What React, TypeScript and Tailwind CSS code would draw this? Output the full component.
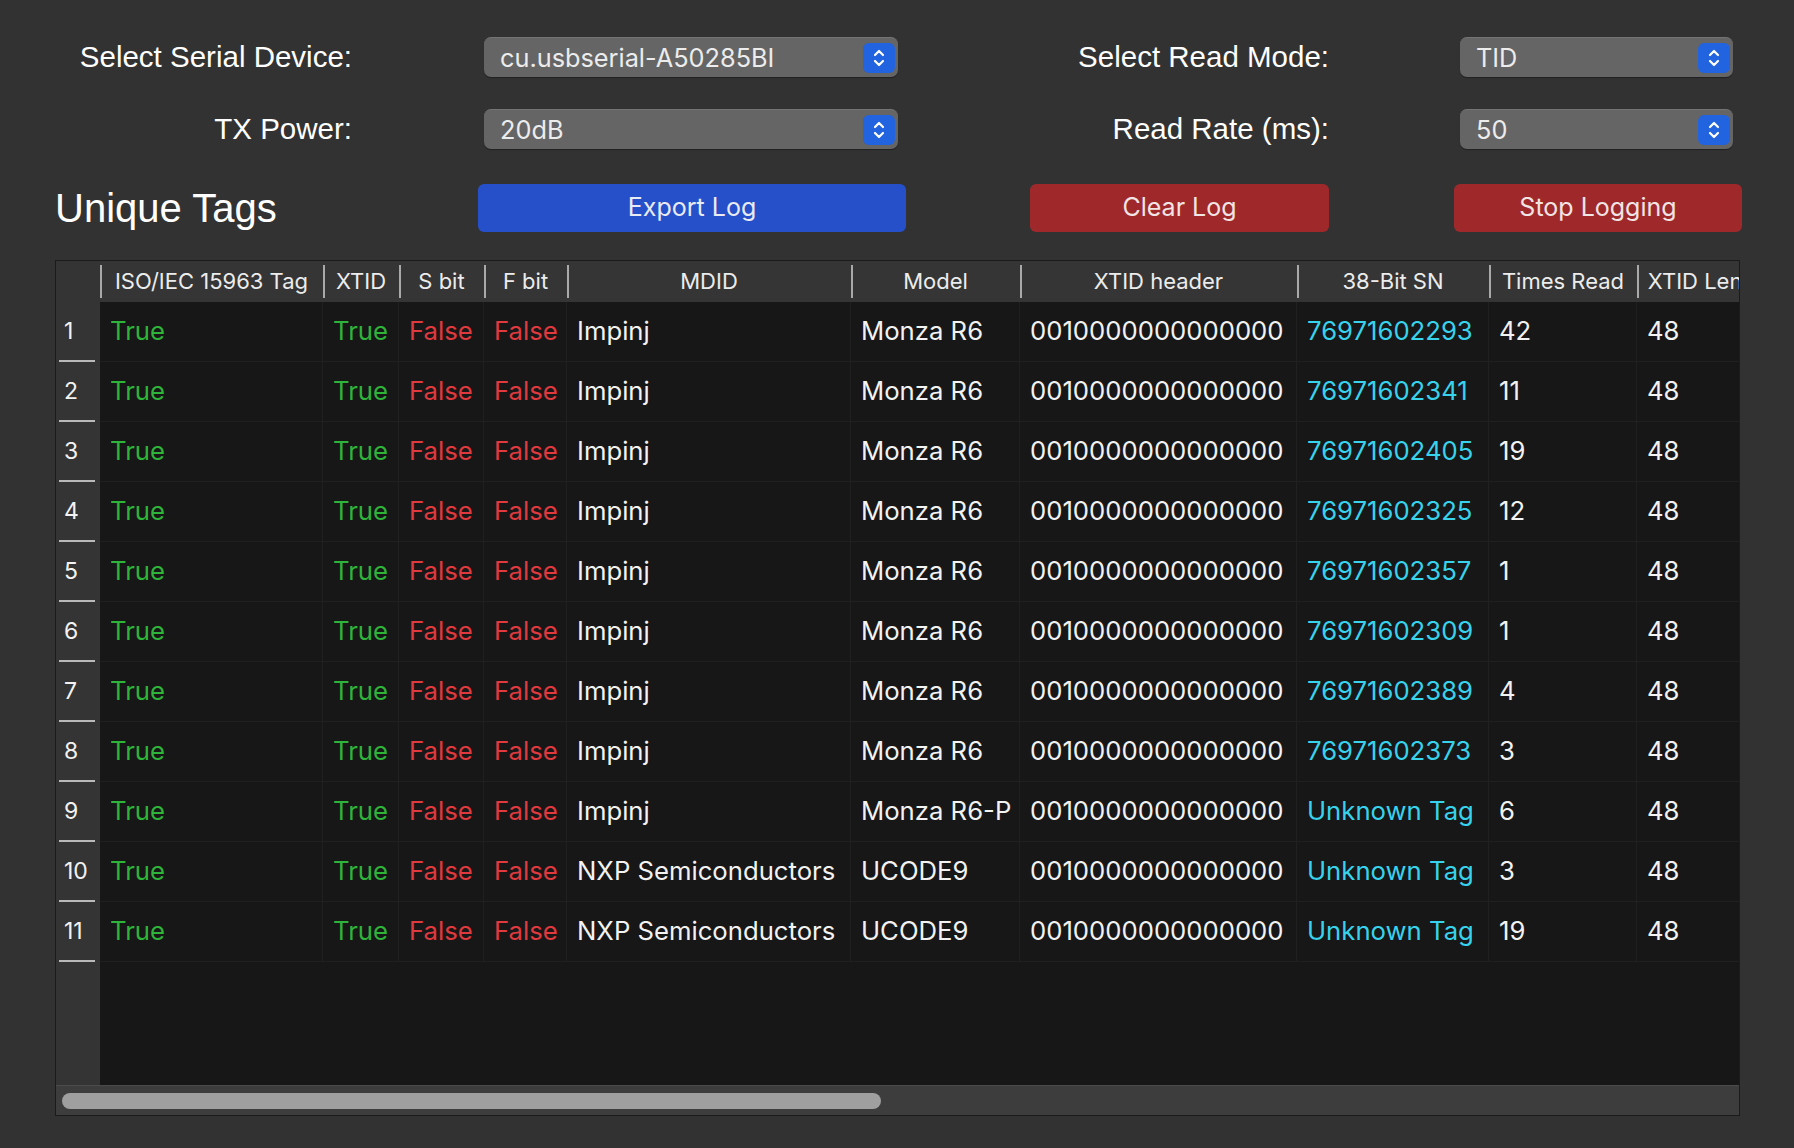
import React from "react";

const cols = [
  { key: "iso", title: "ISO/IEC 15963 Tag", w: 223 },
  { key: "xtid", title: "XTID", w: 76 },
  { key: "s", title: "S bit", w: 85 },
  { key: "f", title: "F bit", w: 83 },
  { key: "mdid", title: "MDID", w: 284 },
  { key: "model", title: "Model", w: 169 },
  { key: "hdr", title: "XTID header", w: 277 },
  { key: "sn", title: "38-Bit SN", w: 192 },
  { key: "times", title: "Times Read", w: 148 },
  { key: "len", title: "XTID Length", w: 150 },
];

const rows: [string, string, string, string][] = [
  ["Impinj", "Monza R6", "76971602293", "42"],
  ["Impinj", "Monza R6", "76971602341", "11"],
  ["Impinj", "Monza R6", "76971602405", "19"],
  ["Impinj", "Monza R6", "76971602325", "12"],
  ["Impinj", "Monza R6", "76971602357", "1"],
  ["Impinj", "Monza R6", "76971602309", "1"],
  ["Impinj", "Monza R6", "76971602389", "4"],
  ["Impinj", "Monza R6", "76971602373", "3"],
  ["Impinj", "Monza R6-P", "Unknown Tag", "6"],
  ["NXP Semiconductors", "UCODE9", "Unknown Tag", "3"],
  ["NXP Semiconductors", "UCODE9", "Unknown Tag", "19"],
];

const font = { fontFamily: "Inter, 'Noto Sans', sans-serif" };
const helv = { fontFamily: "'Liberation Sans', Arial, sans-serif" };

function Stepper() {
  return (
    <div className="w-[32px] h-[30px] rounded-[6px] bg-[#2263df] flex items-center justify-center shrink-0">
      <svg width="14" height="22" viewBox="0 0 14 22" fill="none" stroke="white" strokeWidth="2.2" strokeLinecap="round" strokeLinejoin="round">
        <path d="M3 8 L7 4 L11 8" />
        <path d="M3 14 L7 18 L11 14" />
      </svg>
    </div>
  );
}

function Combo({ value, w }: { value: string; w: string }) {
  return (
    <div className={`${w} h-[40px] rounded-[7px] bg-[#656565] border-t border-[#747474] flex items-center justify-between pl-[16px] pr-[3px] shadow-[0_1px_1px_rgba(0,0,0,0.35)]`}>
      <span className="text-[25.3px] text-[#ececec] leading-none">{value}</span>
      <Stepper />
    </div>
  );
}

function Label({ w, children }: { w: string; children: React.ReactNode }) {
  return (
    <div className={`${w} text-right text-[29.5px] text-white leading-none`} style={helv}>
      {children}
    </div>
  );
}

function Cell({ w, children, cls }: { w: number; children: React.ReactNode; cls?: string }) {
  return (
    <div
      className={`shrink-0 h-full flex items-center pl-[10px] border-r border-[#202020] whitespace-nowrap overflow-hidden ${cls ?? "text-[#f2f2f2]"}`}
      style={{ width: w }}
    >
      {children}
    </div>
  );
}

export default function App() {
  return (
    <div className="w-[1794px] h-[1148px] bg-[#323232] overflow-hidden flex flex-col" style={font}>
      {/* form rows */}
      <div className="flex items-center mt-[37px] h-[40px]">
        <Label w="w-[352px]">Select Serial Device:</Label>
        <div className="ml-[132px]"><Combo value="cu.usbserial-A50285BI" w="w-[414px]" /></div>
        <Label w="w-[431px]">Select Read Mode:</Label>
        <div className="ml-[131px]"><Combo value="TID" w="w-[273px]" /></div>
      </div>
      <div className="flex items-center mt-[32px] h-[40px]">
        <Label w="w-[352px]">TX Power:</Label>
        <div className="ml-[132px]"><Combo value="20dB" w="w-[414px]" /></div>
        <Label w="w-[431px]">Read Rate (ms):</Label>
        <div className="ml-[131px]"><Combo value="50" w="w-[273px]" /></div>
      </div>

      {/* title and buttons */}
      <div className="flex items-center mt-[35px] h-[48px]">
        <div className="ml-[55px] w-[423px] text-[40px] text-white leading-none" style={helv}>Unique Tags</div>
        <button className="w-[428px] h-[48px] rounded-[6px] bg-[#2550c9] text-[25px] text-[#eaeaf2]">Export Log</button>
        <button className="ml-[124px] w-[299px] h-[48px] rounded-[6px] bg-[#9f282a] text-[25px] text-[#f0e4e4]">Clear Log</button>
        <button className="ml-[125px] w-[288px] h-[48px] rounded-[6px] bg-[#9f282a] text-[25px] text-[#f0e4e4]">Stop Logging</button>
      </div>

      {/* table */}
      <div className="ml-[55px] mt-[28px] w-[1685px] h-[856px] border border-[#1b1b1b] flex flex-col overflow-hidden">
        <div className="flex-1 flex min-h-0">
          {/* row header column */}
          <div className="w-[44px] shrink-0 bg-[#343434] flex flex-col">
            <div className="h-[41px] shrink-0" />
            {rows.map((_, i) => (
              <div key={i} className="h-[60px] shrink-0 flex flex-col">
                <div className="flex-1 flex items-center pl-[8px] text-[23px] text-[#f2f2f2]">{i + 1}</div>
                <div className="h-[2px] ml-[3px] mr-[5px] bg-[#b9b9b9]" />
              </div>
            ))}
          </div>
          {/* data area */}
          <div className="flex-1 flex flex-col bg-[#171717] overflow-hidden">
            <div className="h-[41px] shrink-0 bg-[#353535] flex">
              {cols.map((c) => (
                <div key={c.key} className="shrink-0 h-full relative flex items-center justify-center text-[22px] text-[#ececec] whitespace-nowrap" style={{ width: c.w }}>
                  <div className="absolute left-0 top-[4px] bottom-[4px] w-[2px] bg-[#a9a9a9]" />
                  {c.title}
                </div>
              ))}
            </div>
            {rows.map((r, i) => (
              <div key={i} className="h-[60px] shrink-0 flex border-b border-[#202020] text-[25.7px]">
                <Cell w={223} cls="text-[#2fb43a]">True</Cell>
                <Cell w={76} cls="text-[#2fb43a]">True</Cell>
                <Cell w={85} cls="text-[#e0393e]">False</Cell>
                <Cell w={83} cls="text-[#e0393e]">False</Cell>
                <Cell w={284}>{r[0]}</Cell>
                <Cell w={169}>{r[1]}</Cell>
                <Cell w={277}>0010000000000000</Cell>
                <Cell w={192} cls="text-[#37d3ec]">{r[2]}</Cell>
                <Cell w={148}>{r[3]}</Cell>
                <Cell w={150}>48</Cell>
              </div>
            ))}
          </div>
        </div>
        {/* scrollbar */}
        <div className="h-[30px] shrink-0 bg-[#3d3d3d] border-t border-[#4b4b4b] flex items-center pl-[6px]">
          <div className="w-[819px] h-[16px] rounded-full bg-[#9f9f9f]" />
        </div>
      </div>
    </div>
  );
}
